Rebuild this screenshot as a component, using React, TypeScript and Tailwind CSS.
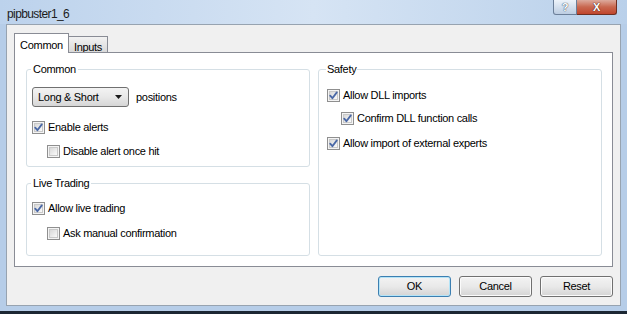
import React from 'react';

function Check({ checked }: { checked: boolean }) {
    return (
        <span className="relative w-[13px] h-[13px] shrink-0 border border-[#8f8f8f] bg-[#f4f4f4] flex items-center justify-center">
            <span className="w-[9px] h-[9px] border border-[#c9c9c9] bg-linear-to-br from-[#d9d9d9] to-[#fafafa]" />
            {checked && (
                <svg className="absolute left-0 top-0" width="11" height="11" viewBox="0 0 11 11">
                    <path d="M2.2 5.6 L4.4 8.2 L8.8 2.4" fill="none" stroke="#4a68a6" strokeWidth="1.8" strokeLinecap="round" strokeLinejoin="round" />
                </svg>
            )}
        </span>
    );
}

function Row({ checked, label, indent, className }: { checked: boolean; label: string; indent?: boolean; className: string }) {
    return (
        <div className={`flex items-center gap-[3px] h-[13px] ${indent ? 'ml-[15px]' : ''} ${className}`}>
            <Check checked={checked} />
            <span className="leading-[13px]">{label}</span>
        </div>
    );
}

function Button({ label, focused }: { label: string; focused?: boolean }) {
    return (
        <div
            className={`w-[73px] h-[21px] rounded-[3px] border flex items-center justify-center bg-linear-to-b from-[#f3f3f3] via-[#e9e9e9] to-[#d4d4d4] ${
                focused ? 'border-[#3c7fb1] shadow-[inset_0_0_0_1px_#b5e4f7]' : 'border-[#707070] shadow-[inset_0_0_0_1px_#fbfbfb]'
            }`}
        >
            {label}
        </div>
    );
}

export default function App() {
    return (
        <div className="w-[627px] h-[314px] flex flex-col overflow-hidden bg-[#b6cde8] text-[11px] tracking-[-0.3px] text-black font-['Liberation_Sans',Arial,sans-serif]">
            {/* Title bar */}
            <div className="h-[24px] shrink-0 flex items-start bg-linear-to-r from-[#bcd2ec] via-[#d6e4f4] to-[#b9d0ea]">
                <div className="pl-[7px] pt-[5px] text-[12px] tracking-[-0.6px] text-[#1c1c1c]">pipbuster1_6</div>
                <div className="ml-auto mr-[10px] flex">
                    <div className="w-[24px] h-[15px] rounded-bl-[3px] border border-t-0 border-[#6b7f99] bg-linear-to-b from-[#edf3fa] to-[#bccde2] flex items-center justify-center text-[11px] font-bold text-white [text-shadow:0_0_1px_#3a4a60,0_0_1px_#3a4a60]">
                        ?
                    </div>
                    <div className="w-[40px] h-[15px] rounded-br-[3px] border border-t-0 border-l-0 border-[#6e2f22] bg-linear-to-b from-[#dcaa9d] via-[#c8674f] to-[#c0452c] flex items-center justify-center text-[11px] font-bold text-white [text-shadow:0_0_1px_#4a1a10,0_0_1px_#4a1a10]">
                        X
                    </div>
                </div>
            </div>

            {/* Client area */}
            <div className="ml-[6px] w-[615px] h-[282px] shrink-0 border border-[#97a3b0] bg-[#f0f0f0] flex flex-col pl-[7px] pt-[8px]">
                {/* Tabs */}
                <div className="h-[20px] flex items-end">
                    <div className="relative z-10 w-[55px] h-[20px] border border-b-0 border-[#898c95] bg-white flex items-start justify-center pt-[3px] text-[11px]">
                        Common
                    </div>
                    <div className="w-[39px] h-[17px] border border-l-0 border-b-0 border-[#898c95] bg-linear-to-b from-[#f2f2f2] to-[#d7d7d7] flex items-start justify-center pt-[2px]">
                        Inputs
                    </div>
                </div>

                {/* Panel */}
                <div className="-mt-[1px] w-[599px] h-[215px] border border-[#898c95] bg-white flex gap-[8px] pl-[11px]">
                    <div className="flex flex-col w-[284px]">
                        <fieldset className="mt-[9px] h-[105px] border border-[#d5dfe5] rounded-[3px] px-[5px]">
                            <legend className="-ml-[1px] px-[2px] leading-[14px]">Common</legend>
                            <div className="mt-[11px] flex items-center">
                                <div className="w-[97px] h-[20px] rounded-[3px] border border-[#707070] bg-linear-to-b from-[#f3f3f3] via-[#e8e8e8] to-[#d6d6d6] flex items-center pl-[5px] pr-[6px]">
                                    <span>Long &amp; Short</span>
                                    <svg className="ml-auto" width="7" height="4" viewBox="0 0 7 4">
                                        <path d="M0 0 H7 L3.5 4 Z" fill="#1a1a1a" />
                                    </svg>
                                </div>
                                <span className="ml-[7px]">positions</span>
                            </div>
                            <Row checked label="Enable alerts" className="mt-[14px]" />
                            <Row checked={false} indent label="Disable alert once hit" className="mt-[11px]" />
                        </fieldset>
                        <fieldset className="mt-[9px] h-[80px] border border-[#d5dfe5] rounded-[3px] px-[5px]">
                            <legend className="-ml-[1px] px-[2px] leading-[14px]">Live Trading</legend>
                            <Row checked label="Allow live trading" className="mt-[12px]" />
                            <Row checked={false} indent label="Ask manual confirmation" className="mt-[12px]" />
                        </fieldset>
                    </div>
                    <fieldset className="mt-[9px] w-[284px] h-[194px] border border-[#d5dfe5] rounded-[3px] px-[8px]">
                        <legend className="-ml-[1px] px-[1px] leading-[14px]">Safety</legend>
                        <Row checked label="Allow DLL imports" className="mt-[13px]" />
                        <Row checked label="Confirm DLL function calls" className="mt-[10px] ml-[14px]" />
                        <Row checked label="Allow import of external experts" className="mt-[12px]" />
                    </fieldset>
                </div>

                {/* Buttons */}
                <div className="mt-[9px] w-[599px] flex justify-end gap-[8px]">
                    <Button label="OK" focused />
                    <Button label="Cancel" />
                    <Button label="Reset" />
                </div>
            </div>

            <div className="h-[5px] shrink-0" />
            <div className="h-[3px] shrink-0 bg-[#1c2733]" />
        </div>
    );
}
